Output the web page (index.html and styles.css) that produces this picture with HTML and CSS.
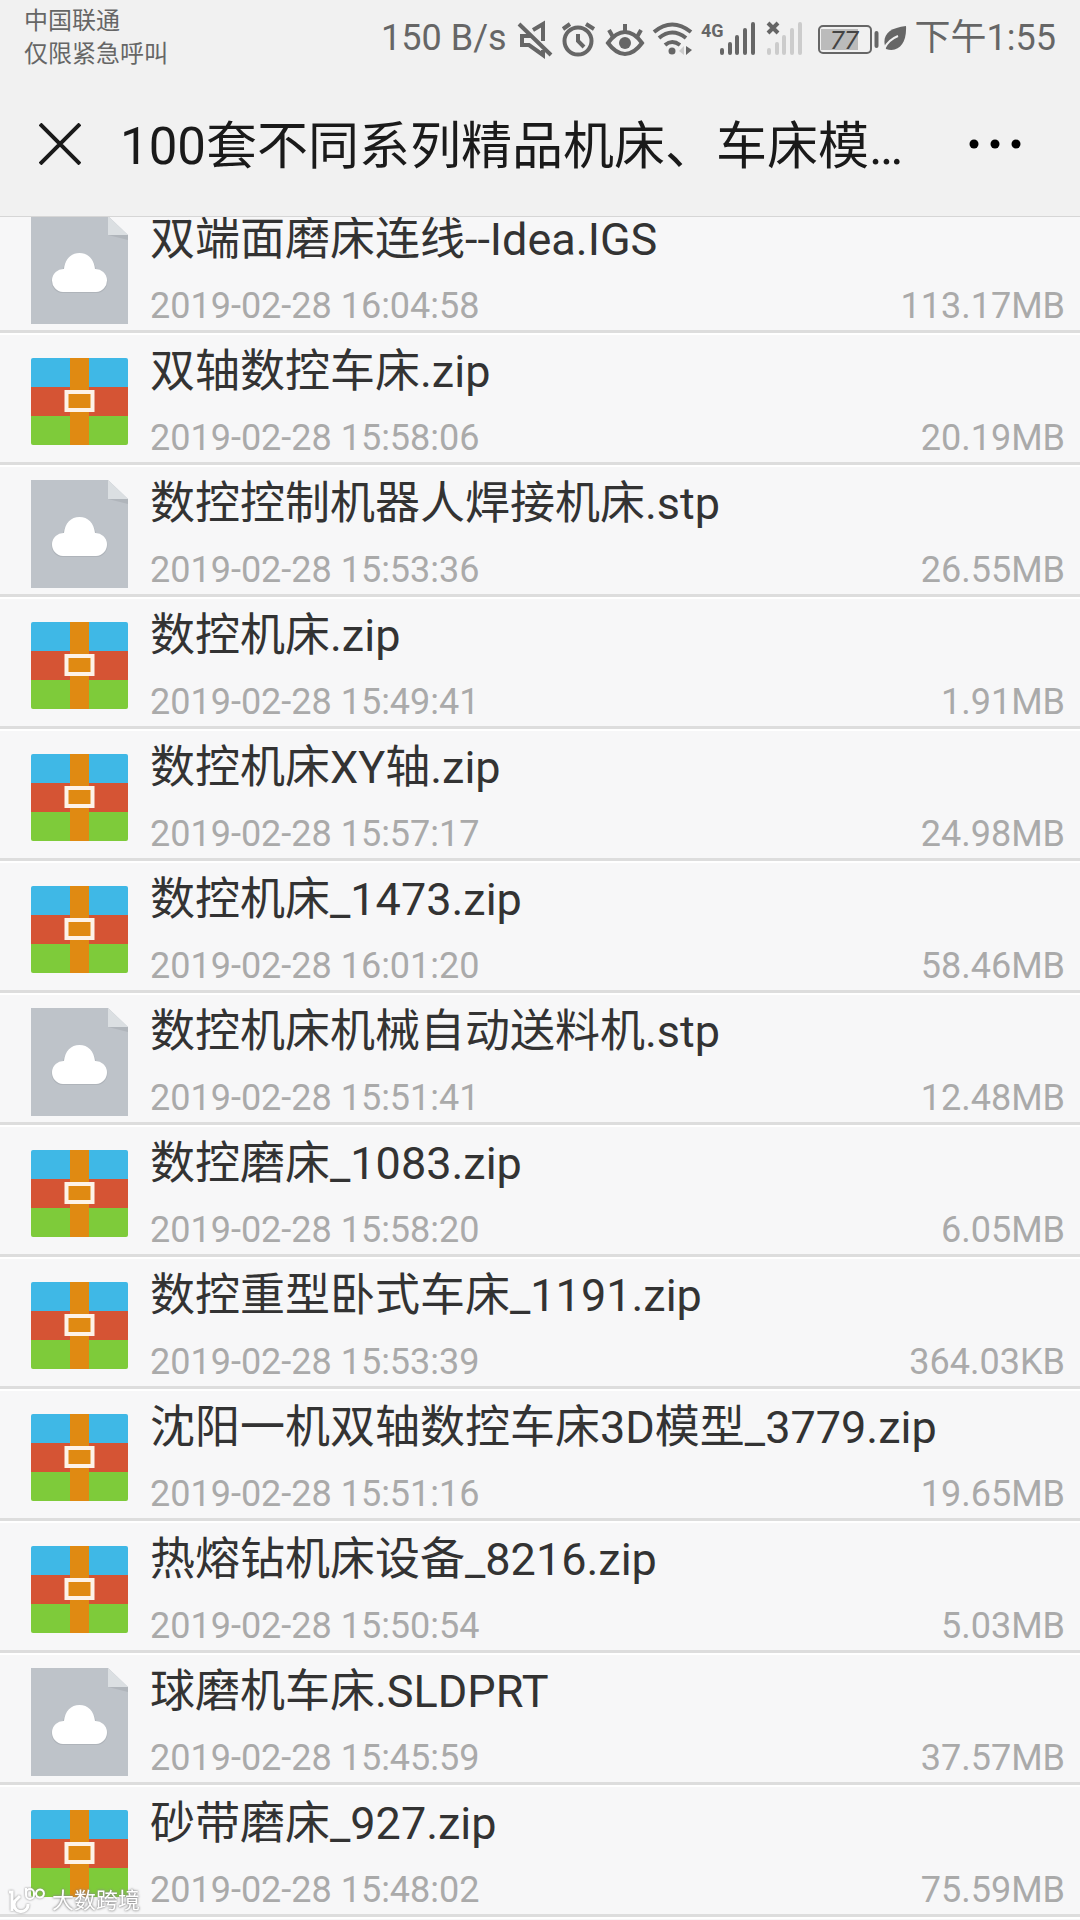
FILE: index.html
```html
<!DOCTYPE html>
<html lang="zh-CN">
<head>
    <meta charset="UTF-8">
    <meta name="viewport" content="width=device-width, initial-scale=1.0">
    <title>100套不同系列精品机床、车床模…</title>
    <link rel="stylesheet" href="styles.css">
</head>
<body>
    <svg class="defs" width="0" height="0" aria-hidden="true">
        <symbol id="icon-file" viewBox="0 0 97 108">
            <path d="M0 0H77L97 19V108H0Z" fill="#bec3c9"/>
            <path d="M77 19H97V24Z" fill="#b0b5bb"/>
            <path d="M77 0L97 19H77Z" fill="#dbdfe2"/>
            <path d="M32 77H65A11 11 0 0 0 65 54C64 45 57 38 48.500 38S33 45 32 54A11 11 0 0 0 32 77Z" fill="#afb4ba"/>
            <path d="M32 76H65A11.500 11.500 0 0 0 64 53C63 43 57 37 48.500 37S34 43 33 53A11.500 11.500 0 0 0 32 76Z" fill="#fff"/>
        </symbol>
        <symbol id="icon-zip" viewBox="0 0 97 108">
            <path d="M2 10H95Q97 10 97 12V39H0V12Q0 10 2 10Z" fill="#3fb8e6"/>
            <path d="M0 39H97V68H0Z" fill="#d55434"/>
            <path d="M0 68H97V95Q97 97 95 97H2Q0 97 0 95Z" fill="#7ecb3a"/>
            <path d="M39 10H58V97H39Z" fill="#e08a12"/>
            <path d="M35.500 44H61.500V62H35.500Z" fill="#e08a12" stroke="#fdf3e8" stroke-width="4"/>
        </symbol>
    </svg>

    <div class="statusbar">
        <div class="carrier">中国联通<br>仅限紧急呼叫</div>
        <div class="status">
            <span class="speed">150 B/s</span>
            <svg class="status-icons" width="372" height="50" viewBox="510 10 372 50" fill="none" stroke="#666" stroke-width="4" aria-hidden="true">
                <path d="M518 21L550 52M530 33H521V42H528L542 52V47M532 27L542 21V38"/>
                <circle cx="577" cy="38" r="13.500"/>
                <path d="M577 31V38L583 44M562 26L569 21M585 21L593 26"/>
                <path d="M607 40Q615 29 624 29T641 40Q633 51 624 51T607 40Z"/>
                <circle cx="624" cy="40" r="6" fill="#666" stroke="none"/>
                <path d="M624 29V21M612 34L608 27M636 34L640 27"/>
                <path d="M653 29Q671 14 690 29M658 35Q671 24 685 35M664 42Q671 36 679 42"/>
                <circle cx="671" cy="48" r="3.500" fill="#666" stroke="none"/>
                <path d="M683 43V52L678 48Z" fill="#ccc" stroke="none"/>
                <path d="M685 43V52L691 47Z" fill="#666" stroke="none"/>
                <text class="network" x="700" y="34">4G</text>
                <path d="M721 47V50M729 41V50M736 34V50M744 27V50M752 21V50" stroke-linecap="round"/>
                <path d="M768 47V50M776 41V50M783 34V50M791 27V50M799 21V50" stroke="#ccc" stroke-linecap="round"/>
                <path d="M767 20L777 30M777 20L767 30"/>
                <rect x="818" y="23" width="52" height="27" rx="4" stroke-width="2"/>
                <path d="M820 26H857V47H820Z" fill="#bbb" stroke="none"/>
                <path d="M875.500 30V43" stroke-linecap="round"/>
                <text class="battery" x="829" y="46">77</text>
            </svg>
            <svg class="leaf" width="24" height="26" viewBox="884 22 24 26" aria-hidden="true">
                <path d="M907 23C908 40 900 50 887 46C882 33 889 25 907 23Z" fill="#666"/>
                <path d="M885 46Q889 37 899 33" fill="none" stroke="#f1f1f1" stroke-width="2"/>
            </svg>
            <span class="clock">下午1:55</span>
        </div>
    </div>

    <header class="header">
        <button class="close" type="button" aria-label="关闭">
            <svg width="42" height="42" viewBox="0 0 42 42"><path d="M1 1L41 41M41 1L1 41" stroke="#1a1a1a" stroke-width="4"/></svg>
        </button>
        <h1>100套不同系列精品机床、车床模…</h1>
        <button class="more" type="button" aria-label="更多">
            <svg width="52" height="10" viewBox="0 0 52 10"><circle cx="5" cy="5" r="4.500"/><circle cx="26" cy="5" r="4.500"/><circle cx="47" cy="5" r="4.500"/></svg>
        </button>
    </header>

    <main class="files">
        <ul class="list">
            <li><a class="file" href="#"><svg class="icon"><use href="#icon-file"/></svg><span class="name">双端面磨床连线--Idea.IGS</span><time>2019-02-28 16:04:58</time><span class="size">113.17MB</span></a></li>
            <li><a class="file" href="#"><svg class="icon"><use href="#icon-zip"/></svg><span class="name">双轴数控车床.zip</span><time>2019-02-28 15:58:06</time><span class="size">20.19MB</span></a></li>
            <li><a class="file" href="#"><svg class="icon"><use href="#icon-file"/></svg><span class="name">数控控制机器人焊接机床.stp</span><time>2019-02-28 15:53:36</time><span class="size">26.55MB</span></a></li>
            <li><a class="file" href="#"><svg class="icon"><use href="#icon-zip"/></svg><span class="name">数控机床.zip</span><time>2019-02-28 15:49:41</time><span class="size">1.91MB</span></a></li>
            <li><a class="file" href="#"><svg class="icon"><use href="#icon-zip"/></svg><span class="name">数控机床XY轴.zip</span><time>2019-02-28 15:57:17</time><span class="size">24.98MB</span></a></li>
            <li><a class="file" href="#"><svg class="icon"><use href="#icon-zip"/></svg><span class="name">数控机床_1473.zip</span><time>2019-02-28 16:01:20</time><span class="size">58.46MB</span></a></li>
            <li><a class="file" href="#"><svg class="icon"><use href="#icon-file"/></svg><span class="name">数控机床机械自动送料机.stp</span><time>2019-02-28 15:51:41</time><span class="size">12.48MB</span></a></li>
            <li><a class="file" href="#"><svg class="icon"><use href="#icon-zip"/></svg><span class="name">数控磨床_1083.zip</span><time>2019-02-28 15:58:20</time><span class="size">6.05MB</span></a></li>
            <li><a class="file" href="#"><svg class="icon"><use href="#icon-zip"/></svg><span class="name">数控重型卧式车床_1191.zip</span><time>2019-02-28 15:53:39</time><span class="size">364.03KB</span></a></li>
            <li><a class="file" href="#"><svg class="icon"><use href="#icon-zip"/></svg><span class="name">沈阳一机双轴数控车床3D模型_3779.zip</span><time>2019-02-28 15:51:16</time><span class="size">19.65MB</span></a></li>
            <li><a class="file" href="#"><svg class="icon"><use href="#icon-zip"/></svg><span class="name">热熔钻机床设备_8216.zip</span><time>2019-02-28 15:50:54</time><span class="size">5.03MB</span></a></li>
            <li><a class="file" href="#"><svg class="icon"><use href="#icon-file"/></svg><span class="name">球磨机车床.SLDPRT</span><time>2019-02-28 15:45:59</time><span class="size">37.57MB</span></a></li>
            <li><a class="file" href="#"><svg class="icon"><use href="#icon-zip"/></svg><span class="name">砂带磨床_927.zip</span><time>2019-02-28 15:48:02</time><span class="size">75.59MB</span></a></li>
        </ul>
    </main>

    <div class="watermark">
        <svg width="40" height="28" viewBox="0 0 40 28" fill="none" stroke="#fff" aria-hidden="true">
            <path d="M1 5H4V24M12 9L7 14A7 7 0 1 0 20 17" stroke-width="3"/>
            <path d="M18 1V8A4 4 0 0 0 26 8V6A4 4 0 0 0 18 6M28 6A4 4 0 1 1 28 7Z" stroke-width="2"/>
        </svg>
        <span>大数跨境</span>
    </div>
</body>
</html>
```

FILE: styles.css
```css
* { box-sizing: border-box; }
body { margin: 0; background: #f7f7f8; color: #333; font-family: Roboto, "Noto Sans CJK SC", sans-serif; }
svg { display: block; }
.defs { position: absolute; }
.statusbar { display: flex; justify-content: space-between; align-items: flex-start; height: 76px; padding: 5px 24px 0; background: #f1f1f1; color: #666; }
.carrier { font-size: 24px; line-height: 33px; }
.status { display: flex; align-items: center; padding-top: 3px; font-size: 36px; line-height: 60px; }
.status-icons { margin-left: 4px; }
.network { font-size: 18px; font-weight: bold; fill: #666; stroke: none; }
.battery { font-size: 26px; font-style: italic; fill: #444; stroke: none; }
.clock { margin-left: 8px; }
.header { display: flex; align-items: center; height: 141px; padding: 0 54px 4px 34px; background: #f1f1f1; border-bottom: 1px solid #d6d6d6; }
.header button { display: flex; flex: none; padding: 5px; border: 0; background: none; }
.header h1 { flex: 1; margin: 0 0 0 34px; padding-top: 6px; overflow: hidden; color: #1a1a1a; font-size: 51px; font-weight: normal; line-height: 76px; white-space: nowrap; }
.files { overflow: hidden; }
/* first row is partly scrolled under the header */
.list { margin: -16px 0 0; padding: 0; list-style: none; border-bottom: 2px solid #fff; }
.file { display: grid; grid-template-columns: 97px auto 1fr; grid-template-rows: 70px 57px; column-gap: 22px; height: 132px; padding: 0 15px 0 31px; border-top: 2px solid #fff; border-bottom: 3px solid #ddd; color: #333; text-decoration: none; }
.icon { grid-row: 1 / 3; width: 97px; height: 108px; margin-top: 13px; }
.name { grid-column: 2 / 4; padding-top: 4px; font-size: 45px; line-height: 66px; white-space: nowrap; }
.file time, .size { padding-top: 9px; color: #aaa; font-size: 36px; line-height: 48px; }
.size { text-align: right; }
.watermark { position: fixed; left: 8px; bottom: 3px; display: flex; align-items: center; gap: 4px; color: #fff; font-size: 22px; line-height: 32px; text-shadow: 0 0 2px #777, 0 0 3px #999; }
.watermark svg { filter: drop-shadow(0 0 1px #888); }
```
